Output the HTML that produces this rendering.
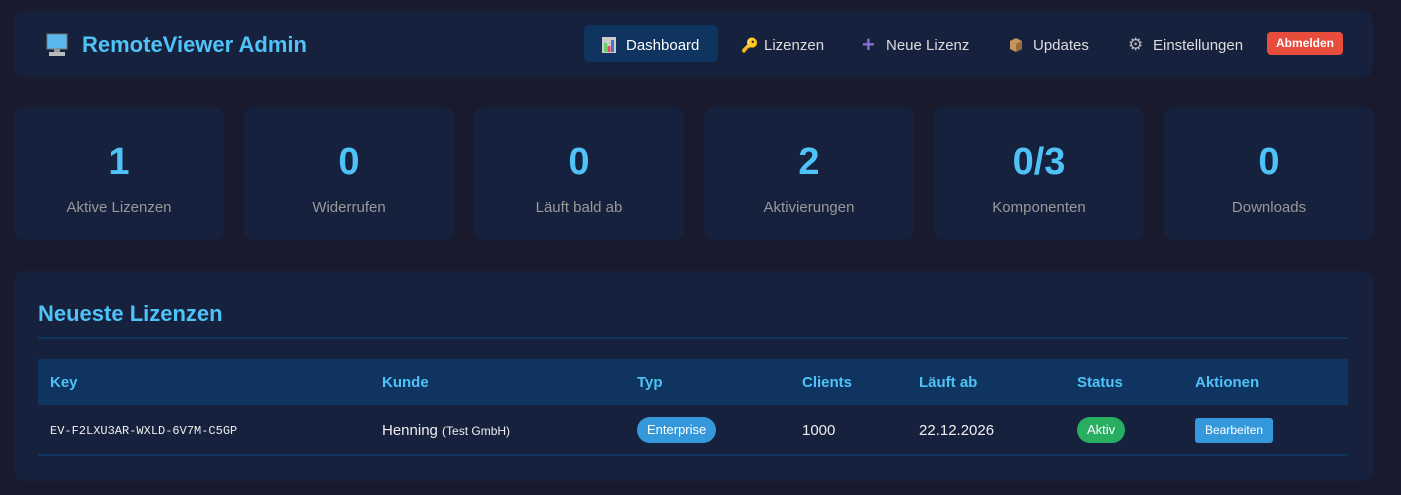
<!DOCTYPE html>
<html><head><meta charset="utf-8"><style>
*{box-sizing:border-box;margin:0;padding:0}
body{width:1401px;height:495px;background:#1a1a2e;font-family:"Liberation Sans","DejaVu Sans",sans-serif;color:#eee;position:relative;overflow:hidden}
.hdr{position:absolute;left:14px;top:11px;width:1359px;height:66px;background:#16213e;border-radius:10px}
.logo{position:absolute;left:32px;top:19px;height:30px;display:flex;align-items:center;font-size:22px;font-weight:bold;color:#4fc3f7}
.logo svg{margin-right:14px}
.nav{position:absolute;top:16px;height:36px;font-size:15px;color:#ddd;display:flex;align-items:center;white-space:nowrap}
.bg{position:absolute;left:570px;top:14px;width:134px;height:37px;background:#0f3460;border-radius:6px}
.ic{position:absolute;top:16px;height:36px;display:flex;align-items:center}
.out{position:absolute;left:1253px;top:21px;width:76px;height:23px;background:#e74c3c;border-radius:4px;color:#fff;font-size:12px;font-weight:bold;text-align:center;line-height:23px}
.card{position:absolute;top:107px;width:210px;height:133px;background:#16213e;border-radius:10px;text-align:center}
.card b{display:block;margin-top:34px;font-size:38px;color:#4fc3f7;line-height:42px}
.card span{display:block;margin-top:16px;font-size:15px;color:#999}
.sec{position:absolute;left:14px;top:271px;width:1359px;height:210px;background:#16213e;border-radius:10px}
.sec h2{position:absolute;left:24px;top:30px;font-size:22px;color:#4fc3f7}
.line{position:absolute;left:24px;top:66px;width:1310px;height:2px;background:#0f3460}
.th{position:absolute;left:24px;top:88px;width:1310px;height:46px;background:#0f3460}
.th div{position:absolute;top:15px;font-size:15px;font-weight:bold;color:#4fc3f7}
.tr{position:absolute;left:24px;top:134px;width:1310px;height:51px;border-bottom:2px solid #0f3460}
.tr div{position:absolute;top:17px;font-size:15px;color:#eee}
.pill{display:inline-block;border-radius:13px;font-size:13px;padding:0 10px;height:26px;line-height:26px;color:#fff}
</style></head><body>
<div class="hdr">
<div class="logo"><svg width="22" height="24" viewBox="0 0 22 24"><rect x="1" y="1" width="20" height="15" fill="#5bb8ee" stroke="#777"/><rect x="8" y="16" width="6" height="3" fill="#999"/><rect x="3" y="19" width="16" height="4" fill="#bbb"/></svg>RemoteViewer Admin</div>
<div class="bg"></div>
<div class="ic" style="left:588px"><svg width="14" height="16"><rect width="14" height="16" fill="#ccc"/><rect x="2" y="6" width="3" height="9" fill="#6c6"/><rect x="5.5" y="9" width="3" height="6" fill="#e46"/><rect x="9" y="3" width="3" height="12" fill="#47c"/></svg></div>
<div class="nav" style="left:612px;color:#fff">Dashboard</div>
<div class="ic" style="left:727px;color:#f5a623;font-size:14px">🔑</div>
<div class="nav" style="left:750px">Lizenzen</div>
<div class="ic" style="left:848px;color:#8a6bd1;font-weight:bold;font-size:22px">+</div>
<div class="nav" style="left:872px">Neue Lizenz</div>
<div class="ic" style="left:995px"><svg width="14" height="16"><path d="M7 1L13 4V12L7 15L1 12V4Z" fill="#c8935a"/><path d="M7 7V15L13 12V4Z" fill="#9a6a3d"/></svg></div>
<div class="nav" style="left:1019px">Updates</div>
<div class="ic" style="left:1114px;color:#bbb;font-size:17px">⚙</div>
<div class="nav" style="left:1139px">Einstellungen</div>
<div class="out">Abmelden</div>
</div>
<div class="card" style="left:14px"><b>1</b><span>Aktive Lizenzen</span></div>
<div class="card" style="left:244px"><b>0</b><span>Widerrufen</span></div>
<div class="card" style="left:474px"><b>0</b><span>Läuft bald ab</span></div>
<div class="card" style="left:704px"><b>2</b><span>Aktivierungen</span></div>
<div class="card" style="left:934px"><b>0/3</b><span>Komponenten</span></div>
<div class="card" style="left:1164px"><b>0</b><span>Downloads</span></div>
<div class="sec">
<h2>Neueste Lizenzen</h2><div class="line"></div>
<div class="th"><div style="left:12px">Key</div><div style="left:344px">Kunde</div><div style="left:599px">Typ</div><div style="left:764px">Clients</div><div style="left:881px">Läuft ab</div><div style="left:1039px">Status</div><div style="left:1157px">Aktionen</div></div>
<div class="tr">
<div style="left:12px;top:19px;font-family:'Liberation Mono',monospace;font-size:12px">EV-F2LXU3AR-WXLD-6V7M-C5GP</div>
<div style="left:344px">Henning <small style="font-size:12px">(Test GmbH)</small></div>
<div style="left:599px;top:12px"><span class="pill" style="background:#3498db">Enterprise</span></div>
<div style="left:764px">1000</div>
<div style="left:881px">22.12.2026</div>
<div style="left:1039px;top:12px"><span class="pill" style="background:#27ae60">Aktiv</span></div>
<div style="left:1157px;top:13px"><span class="pill" style="background:#3498db;border-radius:3px;height:25px;line-height:25px;font-size:12px">Bearbeiten</span></div>
</div>
</div>
</body></html>
